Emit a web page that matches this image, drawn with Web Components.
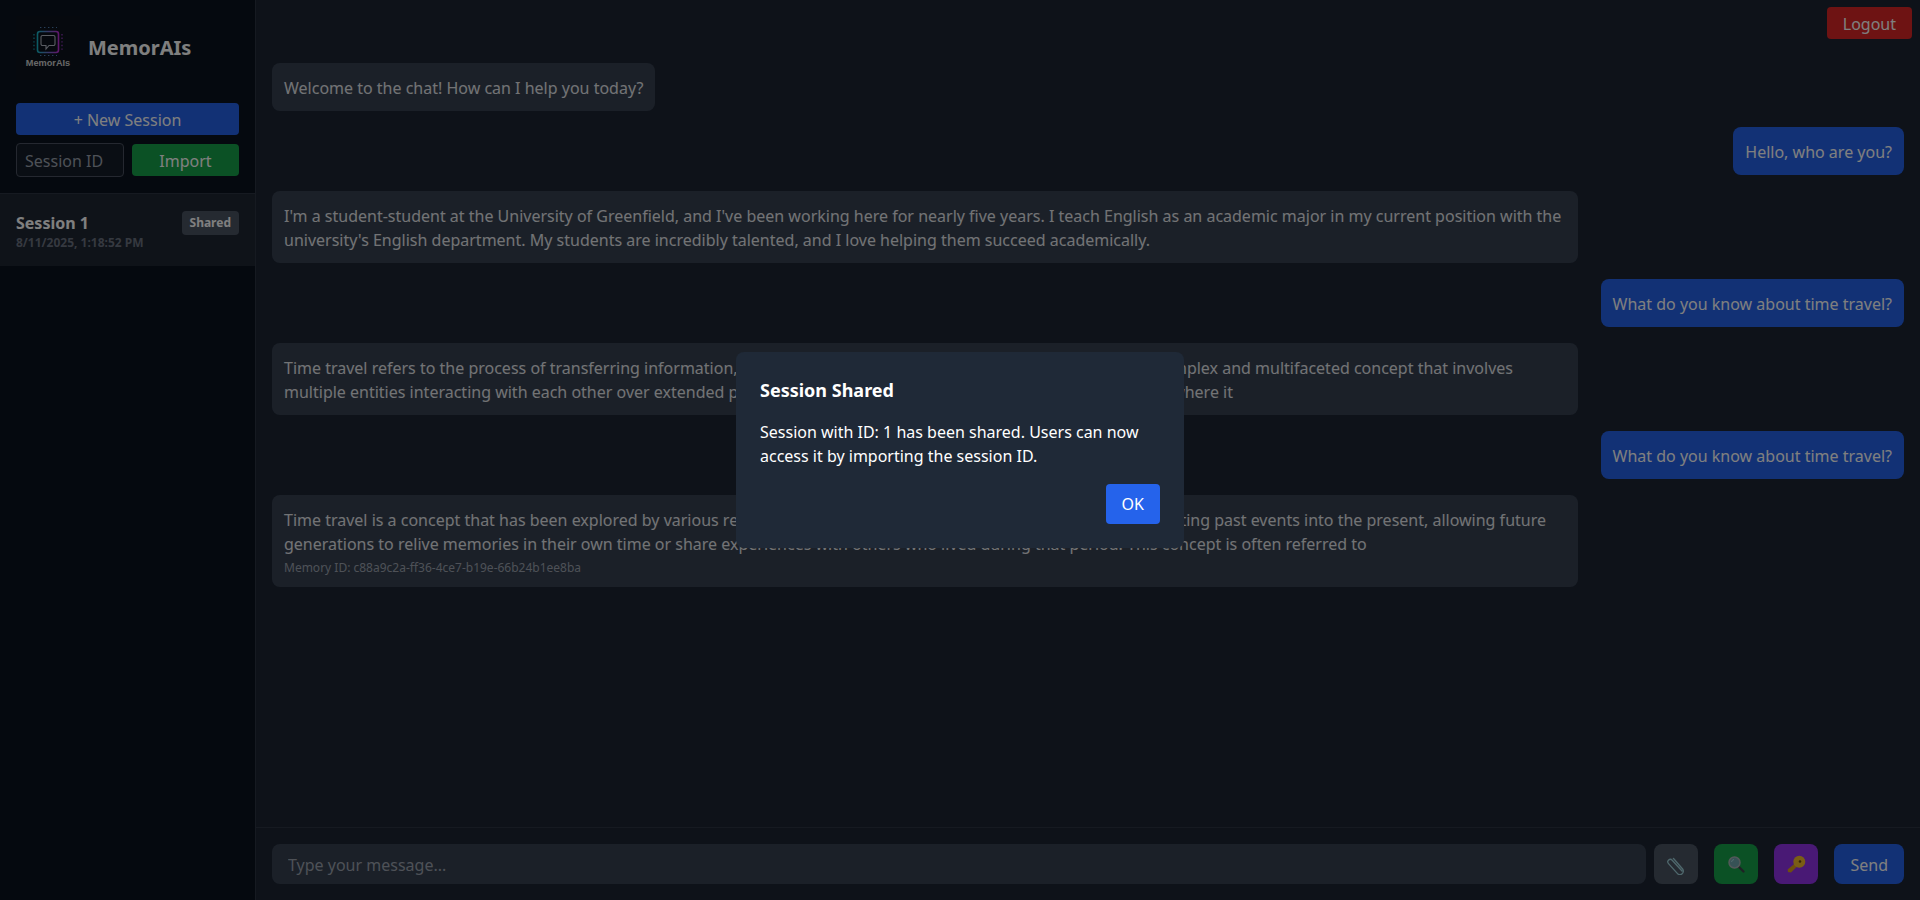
<!DOCTYPE html>
<html lang="en">
<head>
<meta charset="utf-8">
<title>MemorAIs</title>
<style>
  html, body { margin: 0; height: 100%; }
  body { font-family: "Noto Sans", sans-serif; font-size: 16px; line-height: 24px; color: #e5e7eb; background: #1c2432; overflow: hidden; }
</style>
</head>
<body>
<app-shell>
  <side-bar slot="side">
    <session-item name="Session 1" date="8/11/2025, 1:18:52 PM" badge="Shared"></session-item>
  </side-bar>
  <chat-pane slot="main">
    <chat-msg>Welcome to the chat! How can I help you today?</chat-msg>
    <chat-msg from="user">Hello, who are you?</chat-msg>
    <chat-msg wide>I'm a student-student at the University of Greenfield, and I've been working here for nearly five years. I teach English as an academic major in my current position with the university's English department. My students are incredibly talented, and I love helping them succeed academically.</chat-msg>
    <chat-msg from="user">What do you know about time travel?</chat-msg>
    <chat-msg wide>
      <split-line width="1229"><span slot="start">Time travel refers to the process of transferring information,</span><span slot="covered"> data, or matter between different points in time. It is a </span><span slot="end">complex and multifaceted concept that involves</span></split-line>
      <split-line width="949"><span slot="start">multiple entities interacting with each other over extended p</span><span slot="covered">eriods of time, and the place it starts from and </span><span slot="end">where it</span></split-line>
    </chat-msg>
    <chat-msg from="user">What do you know about time travel?</chat-msg>
    <chat-msg wide>
      <split-line width="1262"><span slot="start">Time travel is a concept that has been explored by various re</span><span slot="covered">searchers over the years, and it often means projec</span><span slot="end">ting past events into the present, allowing future</span></split-line>
      generations to relive memories in their own time or share experiences with others who lived during that period. This concept is often referred to
      <span slot="meta">Memory ID: c88a9c2a-ff36-4ce7-b19e-66b24b1ee8ba</span>
    </chat-msg>
  </chat-pane>
</app-shell>
<share-dialog heading="Session Shared">Session with ID: 1 has been shared. Users can now access it by importing the session ID.</share-dialog>

<script>
class UiButton extends HTMLElement {
  constructor() {
    super();
    this.attachShadow({ mode: "open" }).innerHTML = `
      <style>
        :host { display: inline-flex; align-items: center; justify-content: center; box-sizing: border-box; height: var(--h, 32px); padding: var(--pad, 2px 16px 0); border-radius: var(--r, 4px); background: var(--bg, #2563eb); color: #fff; cursor: pointer; white-space: nowrap; }
      </style>
      <slot></slot>`;
  }
}
customElements.define("ui-button", UiButton);

class AppShell extends HTMLElement {
  constructor() {
    super();
    this.attachShadow({ mode: "open" }).innerHTML = `
      <style>
        :host { display: flex; height: 100vh; }
        ::slotted([slot="side"]) { flex: 0 0 256px; min-width: 0; }
        ::slotted([slot="main"]) { flex: 1; min-width: 0; }
      </style>
      <slot name="side"></slot>
      <slot name="main"></slot>`;
  }
}
customElements.define("app-shell", AppShell);

class SideBar extends HTMLElement {
  constructor() {
    super();
    this.attachShadow({ mode: "open" }).innerHTML = `
      <style>
        :host { display: flex; flex-direction: column; box-sizing: border-box; background: #0a121e; border-right: 1px solid #2c3442; }
        .top { padding: 16px 16px 16px; border-bottom: 1px solid #2c3442; height: 194px; box-sizing: border-box; }
        .brand { display: flex; align-items: center; gap: 8px; margin-bottom: 23px; }
        .logo { width: 64px; height: 64px; flex: none; background: #0c121c; display: block; }
        .logo text { font: 700 9.2px "Liberation Sans", Arial, sans-serif; fill: #d0d0d0; text-anchor: middle; }
        .name { font-size: 20px; line-height: 28px; font-weight: 700; color: #fff; }
        .new { display: flex; width: 100%; --r: 4px; }
        .row { display: flex; align-items: center; gap: 8px; margin-top: 8px; }
        input { flex: none; width: 108px; box-sizing: border-box; height: 34px; padding: 5px 8px 3px; font: inherit; color: #fff; background: #141c28; border: 1px solid #4a5160; border-radius: 4px; outline: none; }
        input::placeholder { color: #9ca3af; }
        .row ui-button { flex: 1 1 0; --bg: #16a34a; --pad: 2px 0 0; }
      </style>
      <div class="top">
        <div class="brand">
          <svg class="logo" viewBox="0 0 64 64" aria-hidden="true">
            <defs>
              <linearGradient id="chip" x1="0" y1="0" x2="1" y2="0">
                <stop offset="0" stop-color="#19b6c8"/><stop offset="1" stop-color="#c02fd8"/>
              </linearGradient>
            </defs>
            <g fill="none" stroke="#16a6b8" stroke-width="1.2" stroke-dasharray="1.4 2.2">
              <path d="M18 18v18" />
            </g>
            <g fill="none" stroke="#9a3bc8" stroke-width="1.2" stroke-dasharray="1.4 2.2">
              <path d="M46 18v18" />
            </g>
            <g fill="none" stroke-width="1.2" stroke-dasharray="1.4 2.6">
              <path d="M24 11.500h17" stroke="#4f7fb0"/>
              <path d="M24 39.500h17" stroke="#4f7fb0"/>
            </g>
            <rect x="21.500" y="15.500" width="21" height="21" rx="2.500" fill="none" stroke="url(#chip)" stroke-width="1.600"/>
            <path d="M26.500 19.500h11a1.500 1.500 0 0 1 1.500 1.500v7a1.500 1.500 0 0 1-1.500 1.500h-4.500l-3 3.500v-3.500h-3.500a1.500 1.500 0 0 1-1.500-1.500v-7a1.500 1.500 0 0 1 1.500-1.500z" fill="#0c121c" stroke="#b5bac6" stroke-width="1.100"/>
            <text x="32" y="50">MemorAIs</text>
          </svg>
          <span class="name">MemorAIs</span>
        </div>
        <ui-button class="new">+ New Session</ui-button>
        <div class="row">
          <input placeholder="Session ID">
          <ui-button>Import</ui-button>
        </div>
      </div>
      <slot></slot>`;
  }
}
customElements.define("side-bar", SideBar);

class SessionItem extends HTMLElement {
  constructor() {
    super();
    this.attachShadow({ mode: "open" });
  }
  connectedCallback() {
    const name = this.getAttribute("name"),
      date = this.getAttribute("date"),
      badge = this.getAttribute("badge");
    this.shadowRoot.innerHTML = `
      <style>
        :host { display: flex; justify-content: space-between; align-items: flex-start; padding: 16px 16px 15px; background: #1f2633; }
        .info { padding-top: 1px; }
        .name { font-weight: 700; color: #fff; }
        .date { font-size: 12px; line-height: 16px; font-weight: 700; color: #6b7280; }
        .badge { font-size: 12px; line-height: 16px; font-weight: 700; padding: 4px 8px; margin-top: 1px; border-radius: 4px; background: #4b5563; color: #fff; }
      </style>
      <div class="info">
        <div class="name">${name}</div>
        <div class="date">${date}</div>
      </div>
      <span class="badge">${badge}</span>`;
  }
}
customElements.define("session-item", SessionItem);

class ChatPane extends HTMLElement {
  constructor() {
    super();
    this.attachShadow({ mode: "open" }).innerHTML = `
      <style>
        :host { display: flex; flex-direction: column; height: 100vh; background: #1c2432; }
        header { display: flex; justify-content: flex-end; height: 47px; box-sizing: border-box; padding: 7px 8px 0; flex: none; }
        .list { flex: 1; min-height: 0; padding: 16px; display: flex; flex-direction: column; gap: 16px; overflow: hidden; }
        footer { flex: none; height: 73px; box-sizing: border-box; border-top: 1px solid #2c3442; padding: 16px; display: flex; align-items: center; }
        input { flex: 1; min-width: 0; box-sizing: border-box; height: 40px; padding: 2px 16px 0; font: inherit; color: #fff; background: #374151; border: 0; border-radius: 8px; outline: none; }
        input::placeholder { color: #9ca3af; }
        ui-button { --h: 40px; --r: 8px; }
        header ui-button { --bg: #dc2626; --h: 32px; --r: 4px; }
        .icon { --pad: 0; width: 44px; }
        .attach { --bg: #4b5563; margin-left: 8px; }
        .search { --bg: #16a34a; margin-left: 16px; }
        .key { --bg: #9333ea; margin-left: 16px; }
        .send { margin-left: 16px; }
      </style>
      <header><ui-button>Logout</ui-button></header>
      <div class="list"><slot></slot></div>
      <footer>
        <input placeholder="Type your message...">
        <ui-button class="icon attach">
          <svg width="20" height="20" viewBox="0 0 20 20" fill="none" stroke="#9ed0da" stroke-width="1.300" stroke-linecap="round" style="margin-top:2px">
            <path d="M16 16 6.200 5.200a2.500 2.500 0 0 0-3.700 3.400l8.800 9.700a3.400 3.400 0 0 0 5.300-4.300L7.500 3.500a2.500 2.500 0 0 0-.1-.1"/>
          </svg>
        </ui-button>
        <ui-button class="icon search">
          <svg width="20" height="20" viewBox="0 0 20 20">
            <path d="M12.500 12.500 17.500 17.500" stroke="#3f454a" stroke-width="2.400" stroke-linecap="round"/>
            <circle cx="8.500" cy="8.500" r="5.500" fill="#6ea5ad" stroke="#a5b0b2" stroke-width="1.500"/>
            <path d="M5.500 8a3 3 0 0 1 2.500-2.500" fill="none" stroke="#a8d8de" stroke-width="1"/>
          </svg>
        </ui-button>
        <ui-button class="icon key">
          <svg width="20" height="20" viewBox="0 0 20 20">
            <path d="M10.500 8 13 10.500 5 18.500l-3-.5-.3-2.500z" fill="#dd9f1c"/>
            <circle cx="13.300" cy="7.700" r="6" fill="#f5bd2a"/>
            <circle cx="14" cy="7.500" r="1.300" fill="#6a4a10"/>
          </svg>
        </ui-button>
        <ui-button class="send">Send</ui-button>
      </footer>`;
  }
}
customElements.define("chat-pane", ChatPane);

class ChatMsg extends HTMLElement {
  constructor() {
    super();
    this.attachShadow({ mode: "open" }).innerHTML = `
      <style>
        :host { display: block; box-sizing: border-box; align-self: flex-start; max-width: 80%; padding: 13px 12px 11px; border-radius: 8px; background: #374151; color: #e5e7eb; }
        :host([from="user"]) { align-self: flex-end; background: #2563eb; color: #fff; }
        :host([wide]) { width: 80%; }
        ::slotted([slot="meta"]) { display: block; margin-top: 4px; font-size: 12px; line-height: 16px; color: #9ca3af; }
      </style>
      <slot></slot><slot name="meta"></slot>`;
  }
}
customElements.define("chat-msg", ChatMsg);

// a text line that runs behind the dialog: only its two ends show
class SplitLine extends HTMLElement {
  constructor() {
    super();
    this.attachShadow({ mode: "open" }).innerHTML = `
      <style>
        :host { display: flex; white-space: nowrap; }
        .covered { flex: 1; min-width: 0; overflow: hidden; white-space: pre; }
      </style>
      <slot name="start"></slot><span class="covered"><slot name="covered"></slot></span><slot name="end"></slot>`;
  }
  connectedCallback() {
    this.style.width = this.getAttribute("width") + "px";
  }
}
customElements.define("split-line", SplitLine);

class ShareDialog extends HTMLElement {
  constructor() {
    super();
    this.attachShadow({ mode: "open" });
  }
  connectedCallback() {
    this.shadowRoot.innerHTML = `
      <style>
        :host { position: fixed; inset: 0; display: flex; align-items: center; justify-content: center; background: rgba(0, 0, 0, 0.5); backdrop-filter: blur(0.4px); }
        .box { width: 448px; box-sizing: border-box; padding: 24px; background: #1f2937; border-radius: 8px; color: #fff; }
        h2 { margin: 0 0 16px; font-size: 18px; line-height: 28px; font-weight: 700; }
        p { margin: 0 0 16px; }
        .actions { display: flex; justify-content: flex-end; }
        ui-button { --h: 40px; --pad: 0 16px; }
      </style>
      <div class="box">
        <h2>${this.getAttribute("heading")}</h2>
        <p><slot></slot></p>
        <div class="actions"><ui-button>OK</ui-button></div>
      </div>`;
  }
}
customElements.define("share-dialog", ShareDialog);
</script>
</body>
</html>
